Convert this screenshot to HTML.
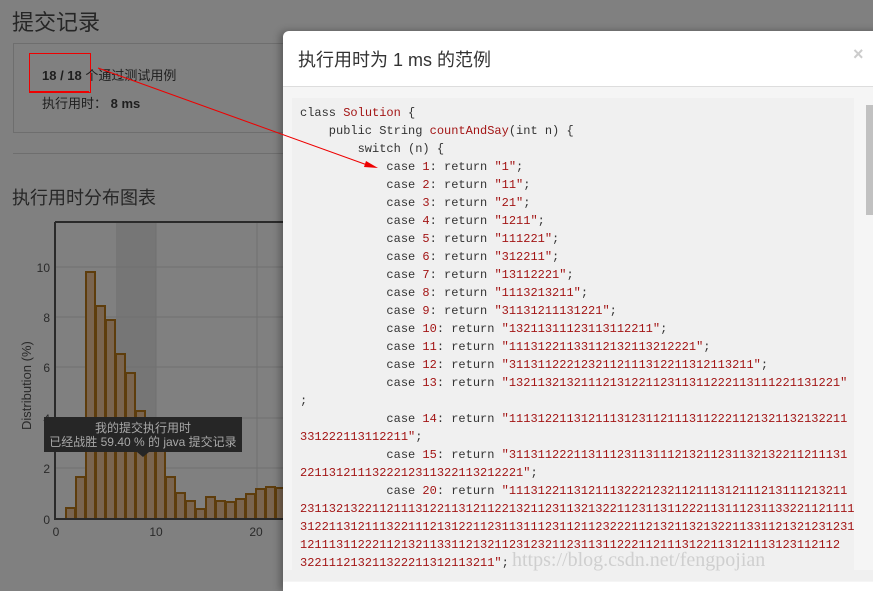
<!DOCTYPE html>
<html><head><meta charset="utf-8"><style>
body{margin:0;width:873px;height:581px;overflow:hidden;background:#808080;font-family:"Liberation Sans","Noto Sans CJK SC",sans-serif;position:relative;color:#222}
.a{position:absolute}
.code{font-family:"Liberation Mono",monospace;font-size:12px;line-height:18px;white-space:pre;color:#333}
.r{color:#a31515}
</style></head><body>
<div class="a" style="left:12px;top:5px;font-size:22px;color:#262626">提交记录</div>
<div class="a" style="left:13px;top:43px;width:300px;height:88px;border:1px solid #6e6e6e"></div>
<div class="a" style="left:29px;top:53px;width:60px;height:38px;border:1px solid #e00"></div>
<div class="a" style="left:29px;top:91px;width:60px;height:1px;background:#e00"></div>
<div class="a" style="left:42px;top:65px;font-size:13px;color:#1e1e1e"><b>18 / 18</b> 个通过测试用例</div>
<div class="a" style="left:42px;top:93px;font-size:13px;color:#1e1e1e">执行用时： <b>8 ms</b></div>
<div class="a" style="left:13px;top:153px;width:300px;height:1px;background:#6e6e6e"></div>
<div class="a" style="left:12px;top:184px;font-size:18px;color:#262626">执行用时分布图表</div>
<svg class="a" style="left:0;top:0" width="290" height="581">
<rect x="116" y="222" width="40" height="297" fill="#767676"/>
<g stroke="#707070" stroke-width="1">
<line x1="55" x2="290" y1="267" y2="267"/><line x1="55" x2="290" y1="317" y2="317"/><line x1="55" x2="290" y1="367" y2="367"/><line x1="55" x2="290" y1="418" y2="418"/><line x1="55" x2="290" y1="468" y2="468"/>
<line x1="156" x2="156" y1="222" y2="519"/><line x1="257" x2="257" y1="222" y2="519"/>
</g>
<g fill="#7a6550" stroke="#5e3d0c" stroke-width="2">
<rect x="66" y="508" width="9" height="11"/>
<rect x="76" y="477" width="9" height="42"/>
<rect x="86" y="272" width="9" height="247"/>
<rect x="96" y="306" width="9" height="213"/>
<rect x="106" y="320" width="9" height="199"/>
<rect x="116" y="354" width="9" height="165"/>
<rect x="126" y="373" width="9" height="146"/>
<rect x="136" y="411" width="9" height="108"/>
<rect x="146" y="440" width="9" height="79"/>
<rect x="156" y="430" width="9" height="89"/>
<rect x="166" y="477" width="9" height="42"/>
<rect x="176" y="493" width="9" height="26"/>
<rect x="186" y="501" width="9" height="18"/>
<rect x="196" y="509" width="9" height="10"/>
<rect x="206" y="497" width="9" height="22"/>
<rect x="216" y="501" width="9" height="18"/>
<rect x="226" y="502" width="9" height="17"/>
<rect x="236" y="499" width="9" height="20"/>
<rect x="246" y="494" width="9" height="25"/>
<rect x="256" y="489" width="9" height="30"/>
<rect x="266" y="487" width="9" height="32"/>
<rect x="276" y="488" width="9" height="31"/>
</g>
<path d="M55 222V519H290M55 222H290" fill="none" stroke="#2a2a2a" stroke-width="2"/>
<g font-size="12" fill="#2a2a2a" font-family="Liberation Sans,sans-serif" text-anchor="end">
<text x="50" y="272">10</text><text x="50" y="322">8</text><text x="50" y="372">6</text><text x="50" y="423">4</text><text x="50" y="473">2</text><text x="50" y="524">0</text>
</g>
<g font-size="12" fill="#2a2a2a" font-family="Liberation Sans,sans-serif" text-anchor="middle">
<text x="56" y="536">0</text><text x="156" y="536">10</text><text x="256" y="536">20</text>
</g>
<text transform="translate(31 430) rotate(-90)" font-size="13" fill="#2a2a2a" font-family="Liberation Sans,sans-serif">Distribution (%)</text>
<rect x="44" y="417" width="198" height="35" fill="#262626"/>
<path d="M137 452l6 5 6-5z" fill="#262626"/>
<text x="143" y="432" font-size="12" fill="#a8a8a8" text-anchor="middle" font-family="Liberation Sans,Noto Sans CJK SC,sans-serif">我的提交执行用时</text>
<text x="143" y="446" font-size="12" fill="#a8a8a8" text-anchor="middle" font-family="Liberation Sans,Noto Sans CJK SC,sans-serif">已经战胜 59.40 % 的 java 提交记录</text>
</svg>
<div class="a" style="left:283px;top:31px;width:600px;height:560px;background:#fff;border-radius:6px 0 0 0;box-shadow:-3px 0 8px rgba(0,0,0,.3)"></div>
<div class="a" style="left:298px;top:46px;font-size:18px;color:#333">执行用时为 1 ms 的范例</div>
<div class="a" style="left:853px;top:44px;font-size:18px;color:#ccc;font-weight:bold">×</div>
<div class="a" style="left:283px;top:86px;width:590px;height:495px;background:#f5f5f5;border-top:1px solid #ddd"></div>
<div class="a" style="left:292px;top:98px;width:562px;height:472px;background:#f0f0f0"></div>
<div class="a" style="left:866px;top:105px;width:7px;height:110px;background:#c1c1c1"></div>
<div class="a" style="left:283px;top:570px;width:590px;height:11px;background:#f0f0f0"></div>
<div class="a code" style="left:300px;top:104px">class <span class="r">Solution</span> {
    public String <span class="r">countAndSay</span>(int n) {
        switch (n) {
            case <span class="r">1</span>: return <span class="r">"1"</span>;
            case <span class="r">2</span>: return <span class="r">"11"</span>;
            case <span class="r">3</span>: return <span class="r">"21"</span>;
            case <span class="r">4</span>: return <span class="r">"1211"</span>;
            case <span class="r">5</span>: return <span class="r">"111221"</span>;
            case <span class="r">6</span>: return <span class="r">"312211"</span>;
            case <span class="r">7</span>: return <span class="r">"13112221"</span>;
            case <span class="r">8</span>: return <span class="r">"1113213211"</span>;
            case <span class="r">9</span>: return <span class="r">"31131211131221"</span>;
            case <span class="r">10</span>: return <span class="r">"13211311123113112211"</span>;
            case <span class="r">11</span>: return <span class="r">"11131221133112132113212221"</span>;
            case <span class="r">12</span>: return <span class="r">"3113112221232112111312211312113211"</span>;
            case <span class="r">13</span>: return <span class="r">"1321132132111213122112311311222113111221131221"</span>
;
            case <span class="r">14</span>: return <span class="r">"11131221131211131231121113112221121321132132211</span>
<span class="r">331222113112211"</span>;
            case <span class="r">15</span>: return <span class="r">"31131122211311123113111213211231132132211211131</span>
<span class="r">2211312111322212311322113212221"</span>;
            case <span class="r">20</span>: return <span class="r">"11131221131211132221232112111312111213111213211</span>
<span class="r">23113213221121113122113121122132112311321322112311311222113111231133221121111</span>
<span class="r">31221131211132211121312211231131112311211232221121321132132211331121321231231</span>
<span class="r">121113112221121321133112132112312321123113112221121113122113121113123112112</span>
<span class="r">322111213211322211312113211"</span>;</div>
<div class="a" style="left:512px;top:549px;font-family:'Liberation Serif',serif;font-size:20px;color:#cfcfcf">https://blog.csdn.net/fengpojian</div>
<svg class="a" style="left:0;top:0" width="873" height="581"><path d="M98 68L370 166" stroke="#e00" stroke-width="1"/><path d="M378 168l-12-7-2 6z" fill="#e00"/></svg>
</body></html>
